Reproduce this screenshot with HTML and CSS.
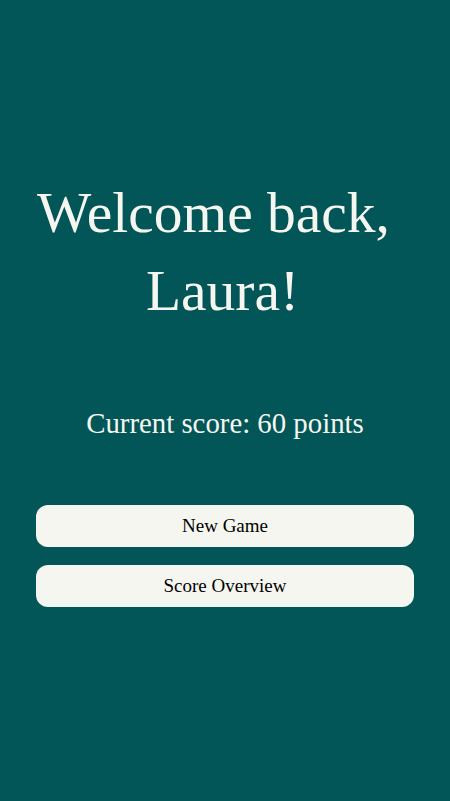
FILE: index.html
```html
<!DOCTYPE html>
<html lang="en">
<head>
<meta charset="utf-8">
<title>Welcome</title>
<link rel="stylesheet" href="styles.css">
</head>
<body>
<main class="screen">
  <h1 class="greeting"><span class="line first">Welcome back,</span> <span class="line">Laura!</span></h1>
  <p class="score">Current score: 60 points</p>
  <div class="actions">
    <button class="btn">New Game</button>
    <button class="btn">Score Overview</button>
  </div>
</main>
</body>
</html>
```
FILE: styles.css
```css
html, body {
  margin: 0;
  padding: 0;
  background: #025657;
}
body {
  font-family: "Liberation Serif", "Times New Roman", serif;
  color: #f6f6f0;
  min-height: 801px;
}
.screen {
  display: flex;
  flex-direction: column;
  padding: 174px 36px 0;
}
.greeting {
  margin: 0;
  padding-right: 5px;
  font-size: 57.5px;
  font-weight: normal;
  line-height: 78px;
  text-align: center;
}
.line {
  display: block;
}
.line.first {
  padding-right: 18px;
}
.score {
  margin: 77px 0 0;
  font-size: 28.8px;
  line-height: 33px;
  text-align: center;
}
.actions {
  margin-top: 65px;
  display: flex;
  flex-direction: column;
  gap: 18px;
}
.btn {
  height: 42px;
  border: none;
  border-radius: 12px;
  background: #f6f6f0;
  color: #000;
  font-family: "Liberation Serif", "Times New Roman", serif;
  font-size: 19px;
  padding: 0;
}
```
